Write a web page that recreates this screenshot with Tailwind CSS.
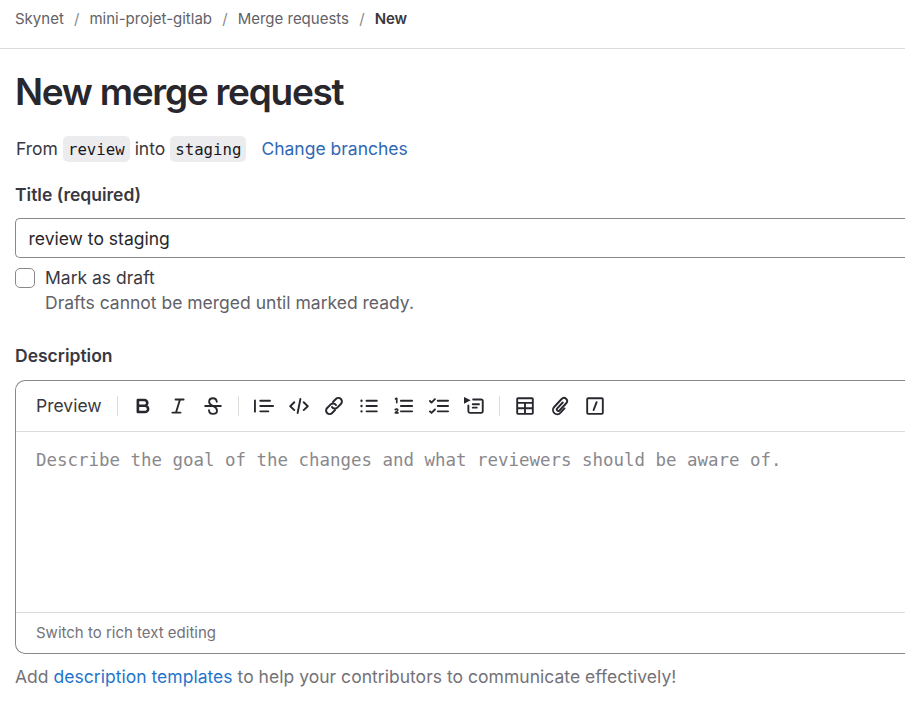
<!DOCTYPE html>
<html lang="en">
<head>
<meta charset="utf-8">
<title>New merge request</title>
<script src="https://cdn.jsdelivr.net/npm/@tailwindcss/browser@4"></script>
</head>
<body class="w-[905px] h-[720px] overflow-hidden bg-white font-['Inter',sans-serif] text-[17.5px] leading-[25px] text-[#3a383f]">
<nav class="h-[49px] border-b border-[#dcdcde] pl-[15px] pt-[9px] flex text-[15px] leading-5 text-[#626168] whitespace-nowrap">
  <a>Skynet</a><span class="w-[25.600px] text-center text-[#89888d]">/</span>
  <a>mini-projet-gitlab</a><span class="w-[25.600px] text-center text-[#89888d]">/</span>
  <a>Merge requests</a><span class="w-[25.600px] text-center text-[#89888d]">/</span>
  <a class="font-semibold tracking-[-0.1px] text-[#3a383f]">New</a>
</nav>
<main class="pl-[15px] whitespace-nowrap">
  <h1 class="mt-[20px] h-[46px] leading-[46px] text-[37px] font-semibold tracking-[-1.270px] text-[#28272d]">New merge request</h1>
  <div class="mt-[21px] pl-px h-[26px] flex items-center">
    <span class="h-[26px] leading-[25px]">From</span>
    <code class="ml-[5px] h-[26px] leading-[28px] px-[5px] rounded-[5px] bg-[#ececef] text-[#18171d] text-[15.7px] font-['DejaVu_Sans_Mono',monospace]">review</code>
    <span class="ml-[5px] h-[26px] leading-[25px]">into</span>
    <code class="ml-[5px] h-[26px] leading-[28px] px-[5px] rounded-[5px] bg-[#ececef] text-[#18171d] text-[15.7px] font-['DejaVu_Sans_Mono',monospace]">staging</code>
    <a class="ml-[15px] h-[26px] leading-[25px] text-[#2f68b4]">Change branches</a>
  </div>
  <label class="block mt-[20px] font-semibold">Title (required)</label>
  <div class="mt-[11px] h-[40px] border border-r-0 border-[#89888d] rounded-l-[5px] pl-[12.500px] flex items-center text-[#28272d]">review to staging</div>
  <div class="mt-[7px] flex">
    <span class="mt-[3px] size-5 border border-[#89888d] rounded-[5px]"></span>
    <div class="ml-[10px]"><div>Mark as draft</div><div class="text-[#626168]">Drafts cannot be merged until marked ready.</div></div>
  </div>
  <label class="block mt-[28px] font-semibold">Description</label>
  <section class="mt-[12px] h-[274px] border border-r-0 border-[#89888d] rounded-l-[10px] flex flex-col">
    <div class="h-[51px] border-b border-[#dcdcde] pl-[20px] flex items-center">
      <span class="w-[81px] h-[27px] leading-[25px]">Preview</span>
      <span class="w-px h-5 bg-[#dcdcde] mr-[15px]"></span>
      <div class="flex gap-[15px] text-[#28272d]">
        <svg class="size-5" viewBox="0 0 16 16" fill="none" stroke="currentColor" stroke-width="2.100" stroke-linejoin="round"><path d="M3.900 3.200h5.200a2.300 2.300 0 0 1 0 4.600H3.900zM3.900 7.800h5.700a2.500 2.500 0 0 1 0 5H3.900z"/></svg>
        <svg class="size-5" viewBox="0 0 16 16" fill="none" stroke="currentColor" stroke-width="1.500" stroke-linecap="round"><path d="M6 2.750h6.500M3.500 13.250h6.500M9.600 2.750l-3.200 10.500"/></svg>
        <svg class="size-5" viewBox="0 0 16 16" fill="none" stroke="currentColor" stroke-width="1.500" stroke-linecap="round"><path d="M11 4.600C10.800 2.800 9.700 1.750 8 1.750c-1.800 0-3.100 1-3.100 2.800C4.900 6.700 6.500 7.300 8 8c1.800.8 3.200 1.500 3.200 3.500 0 1.700-1.400 2.750-3.200 2.750-1.900 0-3.100-1-3.200-2.900M1.750 8h12.500"/></svg>
      </div>
      <span class="w-px h-5 bg-[#dcdcde] ml-[15px] mr-[15px]"></span>
      <div class="flex gap-[15px] text-[#28272d]">
        <svg class="size-5" viewBox="0 0 16 16" fill="none" stroke="currentColor" stroke-width="1.500" stroke-linecap="round"><path d="M.75 3.500v9M5 3.750h7.800M5 8h10.250M5 12.250h6.500"/></svg>
        <svg class="size-5" viewBox="0 0 16 16" fill="none" stroke="currentColor" stroke-width="1.500" stroke-linecap="round" stroke-linejoin="round"><path d="M4.250 5L1 8.200l3.250 3.100M11.750 5L15 8.200l-3.250 3.100M9.100 2.400L6.900 13.600"/></svg>
        <svg class="size-5" viewBox="0 0 16 16" fill="none" stroke="currentColor" stroke-width="1.600" stroke-linecap="round"><path d="M7.200 4.700l2.300-2.300a2.700 2.700 0 0 1 4 4L10.600 9.300a2.700 2.700 0 0 1-4.200-.5M8.800 11.300l-2.300 2.300a2.700 2.700 0 0 1-4-4L5.400 6.700a2.700 2.700 0 0 1 4.200.5"/></svg>
        <svg class="size-5" viewBox="0 0 16 16" fill="none" stroke="currentColor" stroke-width="1.500" stroke-linecap="round"><path d="M6 3.750h8.250M6 8h8.250M6 12.250h8.250"/><path stroke-width="1.900" d="M2 3.750h.01M2 8h.01M2 12.250h.01"/></svg>
        <svg class="size-5" viewBox="0 0 16 16" fill="none" stroke="currentColor" stroke-width="1.500" stroke-linecap="round"><path d="M5.500 3.750h9M5.500 8h9M5.500 12.250h9"/><path stroke-width="1.300" stroke-linejoin="round" d="M1.200 2.300L2.200 1.900v3.500M1 10.900c.8-.9 2.200-.4 2 .5-.1.700-1.400 1.200-2 2.100h2.200"/></svg>
        <svg class="size-5" viewBox="0 0 16 16" fill="none" stroke="currentColor" stroke-width="1.500" stroke-linecap="round" stroke-linejoin="round"><path d="M7 3.750h8.250M7 8h8.250M7 12.250h8.250M.75 4l1.250 1.250L4.750 2.500M.75 12.300l1.250 1.250L4.750 10.800"/></svg>
        <svg class="size-5" viewBox="0 0 16 16" fill="none" stroke="currentColor" stroke-width="1.500" stroke-linecap="round"><path d="M7.300 2.750h6.500a1.200 1.200 0 0 1 1.200 1.200v8.300a1.200 1.200 0 0 1-1.200 1.200H4.700A1.200 1.200 0 0 1 3.500 12.250V7.500M7 6.600h5M7 9.300h3.200"/><path fill="currentColor" stroke="none" d="M0 .7v5.500L5.400 3.400z"/></svg>
      </div>
      <span class="w-px h-5 bg-[#dcdcde] ml-[15px] mr-[15px]"></span>
      <div class="flex gap-[15px] text-[#28272d]">
        <svg class="size-5" viewBox="0 0 16 16" fill="none" stroke="currentColor" stroke-width="1.500"><rect x="1.750" y="1.750" width="12.500" height="12.500" rx=".6"/><path d="M2 5.500h12M2 9.800h12M8 5.500v8.700"/></svg>
        <svg class="size-5" viewBox="0 0 16 16" fill="none" stroke="currentColor" stroke-width="1.500" stroke-linecap="round"><path d="M10.200 5.200L5.800 9.900a1.200 1.200 0 0 0 1.800 1.700l5.400-5.800a2.500 2.500 0 0 0-3.700-3.400L3.300 8.800a3.400 3.400 0 0 0 5 4.700l3.300-3.600"/></svg>
        <svg class="size-5" viewBox="0 0 16 16" fill="none" stroke="currentColor" stroke-width="1.500" stroke-linecap="round"><rect x="1.750" y="1.750" width="12.500" height="12.500" rx=".8"/><path d="M9.300 4.900L6.900 11.200"/></svg>
      </div>
    </div>
    <div class="flex-1 pl-[20px] pt-[16px] font-['DejaVu_Sans_Mono',monospace] text-[17.440px] leading-[25px] text-[#89888d]">Describe the goal of the changes and what reviewers should be aware of.</div>
    <div class="h-[41px] border-t border-[#dcdcde] pl-[20px] leading-[40px] text-[15px] text-[#737278]">Switch to rich text editing</div>
  </section>
  <p class="mt-[10px] tracking-[0.025px] text-[#737278]">Add <a class="text-[#1f75cb]">description templates</a> to help your contributors to communicate effectively!</p>
</main>
</body>
</html>
